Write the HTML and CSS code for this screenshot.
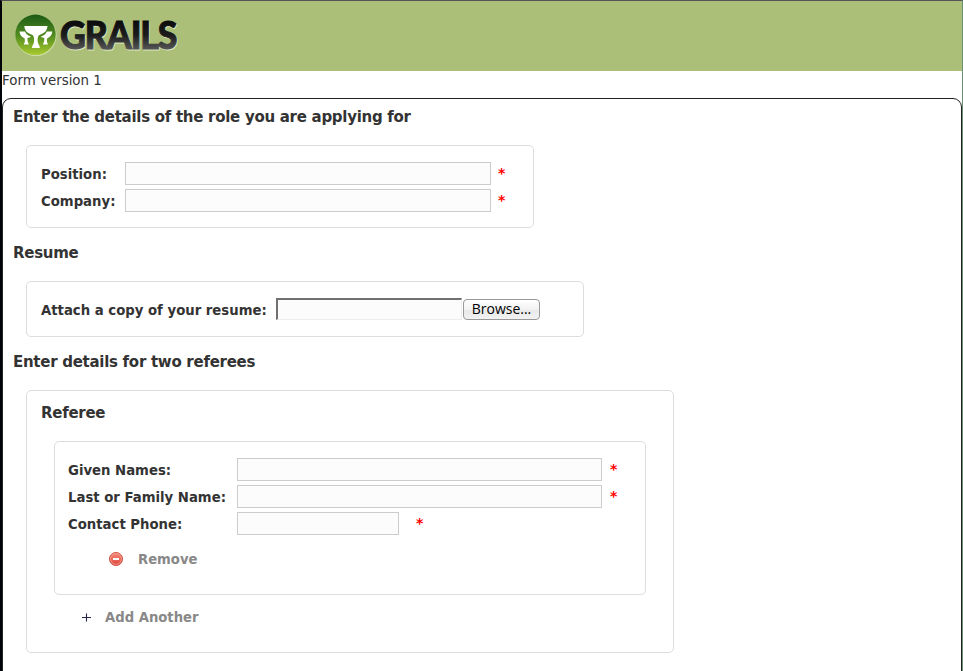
FILE: index.html
```html
<!DOCTYPE html>
<html lang="en">
<head>
<meta charset="utf-8">
<title>Grails</title>
<link rel="stylesheet" href="styles.css">
</head>
<body>
<div class="page">
  <header class="banner">
    <svg class="logo" width="220" height="70" viewBox="0 0 220 70" role="img" aria-label="Grails">
      <defs>
        <linearGradient id="disc" x1="0" y1="0" x2="0" y2="1">
          <stop offset="0" stop-color="#1d5a16"/>
          <stop offset="0.5" stop-color="#4f8a1f"/>
          <stop offset="1" stop-color="#a9c92f"/>
        </linearGradient>
        <linearGradient id="word" gradientUnits="userSpaceOnUse" x1="0" y1="-28" x2="0" y2="0">
          <stop offset="0" stop-color="#0c0c0c"/>
          <stop offset="0.5" stop-color="#1c1c1c"/>
          <stop offset="1" stop-color="#555"/>
        </linearGradient>
      </defs>
      <circle cx="36" cy="35.500" r="20.500" fill="#d0dfab"/>
      <circle cx="35.500" cy="34.800" r="20.200" fill="url(#disc)"/>
      <g fill="#fff">
        <path d="M24.300 26h23.200c-.4 5-3.200 7.300-7.200 8.500-2.600 1-3 4-2.400 8 .4 2.400 1.700 2.600 2 5.500h-8c.3-2.900 1.600-3.100 2-5.500.6-4 .2-7-2.400-8-4-1.200-6.800-3.500-7.200-8.500z"/>
        <path id="side" d="M19.500 31.500h5.500c1 2.500 3 4.200 6 5-1.200 1.200-2.500 1.200-3.400 1.600-.5 2 .1 4 1.400 6.400h-5.200c1.200-2.200 1.400-4.500.7-6.200-2.700-1.100-4.700-3.200-5-6.800z"/>
        <use href="#side" transform="translate(71.800 0) scale(-1 1)"/>
      </g>
      <g class="wordmark">
        <text transform="translate(60.800 50) scale(.93 1)" fill="#dce7c2" stroke="#dce7c2">GRAILS</text>
        <text transform="translate(60 49.300) scale(.93 1)" fill="url(#word)" stroke="url(#word)">GRAILS</text>
      </g>
    </svg>
  </header>
  <div class="version">Form version 1</div>
  <main class="panel">
    <h3>Enter the details of the role you are applying for</h3>
    <section class="box role">
      <div class="row"><label for="position">Position:</label><input id="position" type="text"><span class="req">*</span></div>
      <div class="row"><label for="company">Company:</label><input id="company" type="text"><span class="req">*</span></div>
    </section>
    <h3 class="resume-title">Resume</h3>
    <section class="box resume">
      <label for="file">Attach a copy of your resume:</label><input id="file" class="file" type="text"><button class="browse">Browse...</button>
    </section>
    <h3 class="referees-title">Enter details for two referees</h3>
    <section class="box referees">
      <h3 class="referee-title">Referee</h3>
      <div class="box referee">
        <div class="row"><label for="given">Given Names:</label><input id="given" type="text"><span class="req">*</span></div>
        <div class="row"><label for="family">Last or Family Name:</label><input id="family" type="text"><span class="req">*</span></div>
        <div class="row"><label for="phone">Contact Phone:</label><input id="phone" class="short" type="text"><span class="req far">*</span></div>
        <div class="action remove">
          <svg width="14" height="14" viewBox="0 0 14 14">
            <defs><linearGradient id="red" x1="0" y1="0" x2="0" y2="1"><stop offset="0" stop-color="#f58b7c"/><stop offset="1" stop-color="#dd4438"/></linearGradient></defs>
            <circle cx="7" cy="7" r="6.500" fill="url(#red)" stroke="#cf4f43"/>
            <circle cx="7" cy="7" r="5.400" fill="none" stroke="#f5a398" stroke-width=".8"/>
            <rect x="4" y="6" width="6" height="2" fill="#fff"/>
          </svg>
          <span>Remove</span>
        </div>
      </div>
      <div class="action add">
        <svg width="10" height="10" viewBox="0 0 10 10"><path d="M1 5.500h9M5.500 1.500v8" stroke="#26264a" stroke-width="1.100"/></svg>
        <span>Add Another</span>
      </div>
    </section>
  </main>
</div>
</body>
</html>
```
FILE: styles.css
```css
* { box-sizing: border-box; }
body {
  margin: 0;
  height: 671px;
  overflow: hidden;
  background: #fff;
  color: #333;
  font-family: "DejaVu Sans", sans-serif;
  font-size: 13px;
}
.page {
  height: 671px;
  overflow: hidden;
  border-top: 1px solid #555358;
  border-left: 2px solid #000308;
  border-right: 1px solid #6b8f72;
}
.banner { height: 70px; background: #abbf78; }
.logo { display: block; margin-left: -2px; overflow: visible; transform: translateY(-1px); }
.wordmark { font: 900 38.5px Lato, sans-serif; letter-spacing: -1.3px; stroke-width: 1px; }
.version { height: 27px; line-height: 19px; font-size: 13.4px; }
.panel {
  height: 620px;
  padding: 8px 10px;
  border: 1px solid #222;
  border-radius: 9px;
}
h3 { margin: 0; height: 20px; line-height: 20px; font-size: 15px; font-weight: 700; letter-spacing: -0.28px; white-space: nowrap; }
.box { border: 1px solid #ddd; border-radius: 5px; }
.panel > .box { margin-left: 13px; }
.role { width: 508px; height: 83px; margin-top: 18px; padding: 16px 14px; }
.row { display: flex; height: 23px; margin-bottom: 4px; }
label { font-size: 13.25px; font-weight: 700; line-height: 26px; white-space: nowrap; }
.role label { width: 84px; }
input {
  width: 366px;
  height: 23px;
  margin: 0;
  padding: 0;
  border: 1px solid #ccc;
  background: #fcfcfc;
}
.req { margin-left: 7px; line-height: 23px; color: #f00; font-size: 14px; font-weight: 700; }
.req.far { margin-left: 17px; }
.resume-title { margin-top: 15px; }
.resume { display: flex; width: 558px; height: 56px; margin-top: 18px; padding: 16px 14px; }
.resume label { width: 235px; }
.file { width: 186px; height: 22px; border: 1px solid #eee; border-top: 2px solid #707070; border-left: 2px solid #707070; }
.browse {
  width: 77px;
  height: 21px;
  margin: 1px 0 0 1px;
  padding: 0 0 2px;
  border: 1px solid #999;
  border-radius: 4px;
  background: linear-gradient(#fff, #f2f2f2 50%, #e9e9e9 55%, #f2f2f2);
  color: #000;
  font: 14px/17px "Open Sans", sans-serif;
}
.referees-title { margin-top: 15px; }
.referees { width: 648px; height: 263px; margin-top: 18px; padding: 12px 14px; }
.referee { width: 592px; height: 154px; margin: 18px 0 0 13px; padding: 16px 13px; }
.referee label { width: 169px; }
.referee input { width: 365px; }
.referee .req { margin-left: 8px; }
.referee .far { margin-left: 17px; }
.referee .short { width: 162px; }
.action { display: flex; align-items: center; height: 20px; color: #888; font-size: 13.2px; font-weight: 700; }
.remove { gap: 15px; margin: 14px 0 0 41px; }
.add { gap: 14px; margin: 12px 0 0 40px; }
```
